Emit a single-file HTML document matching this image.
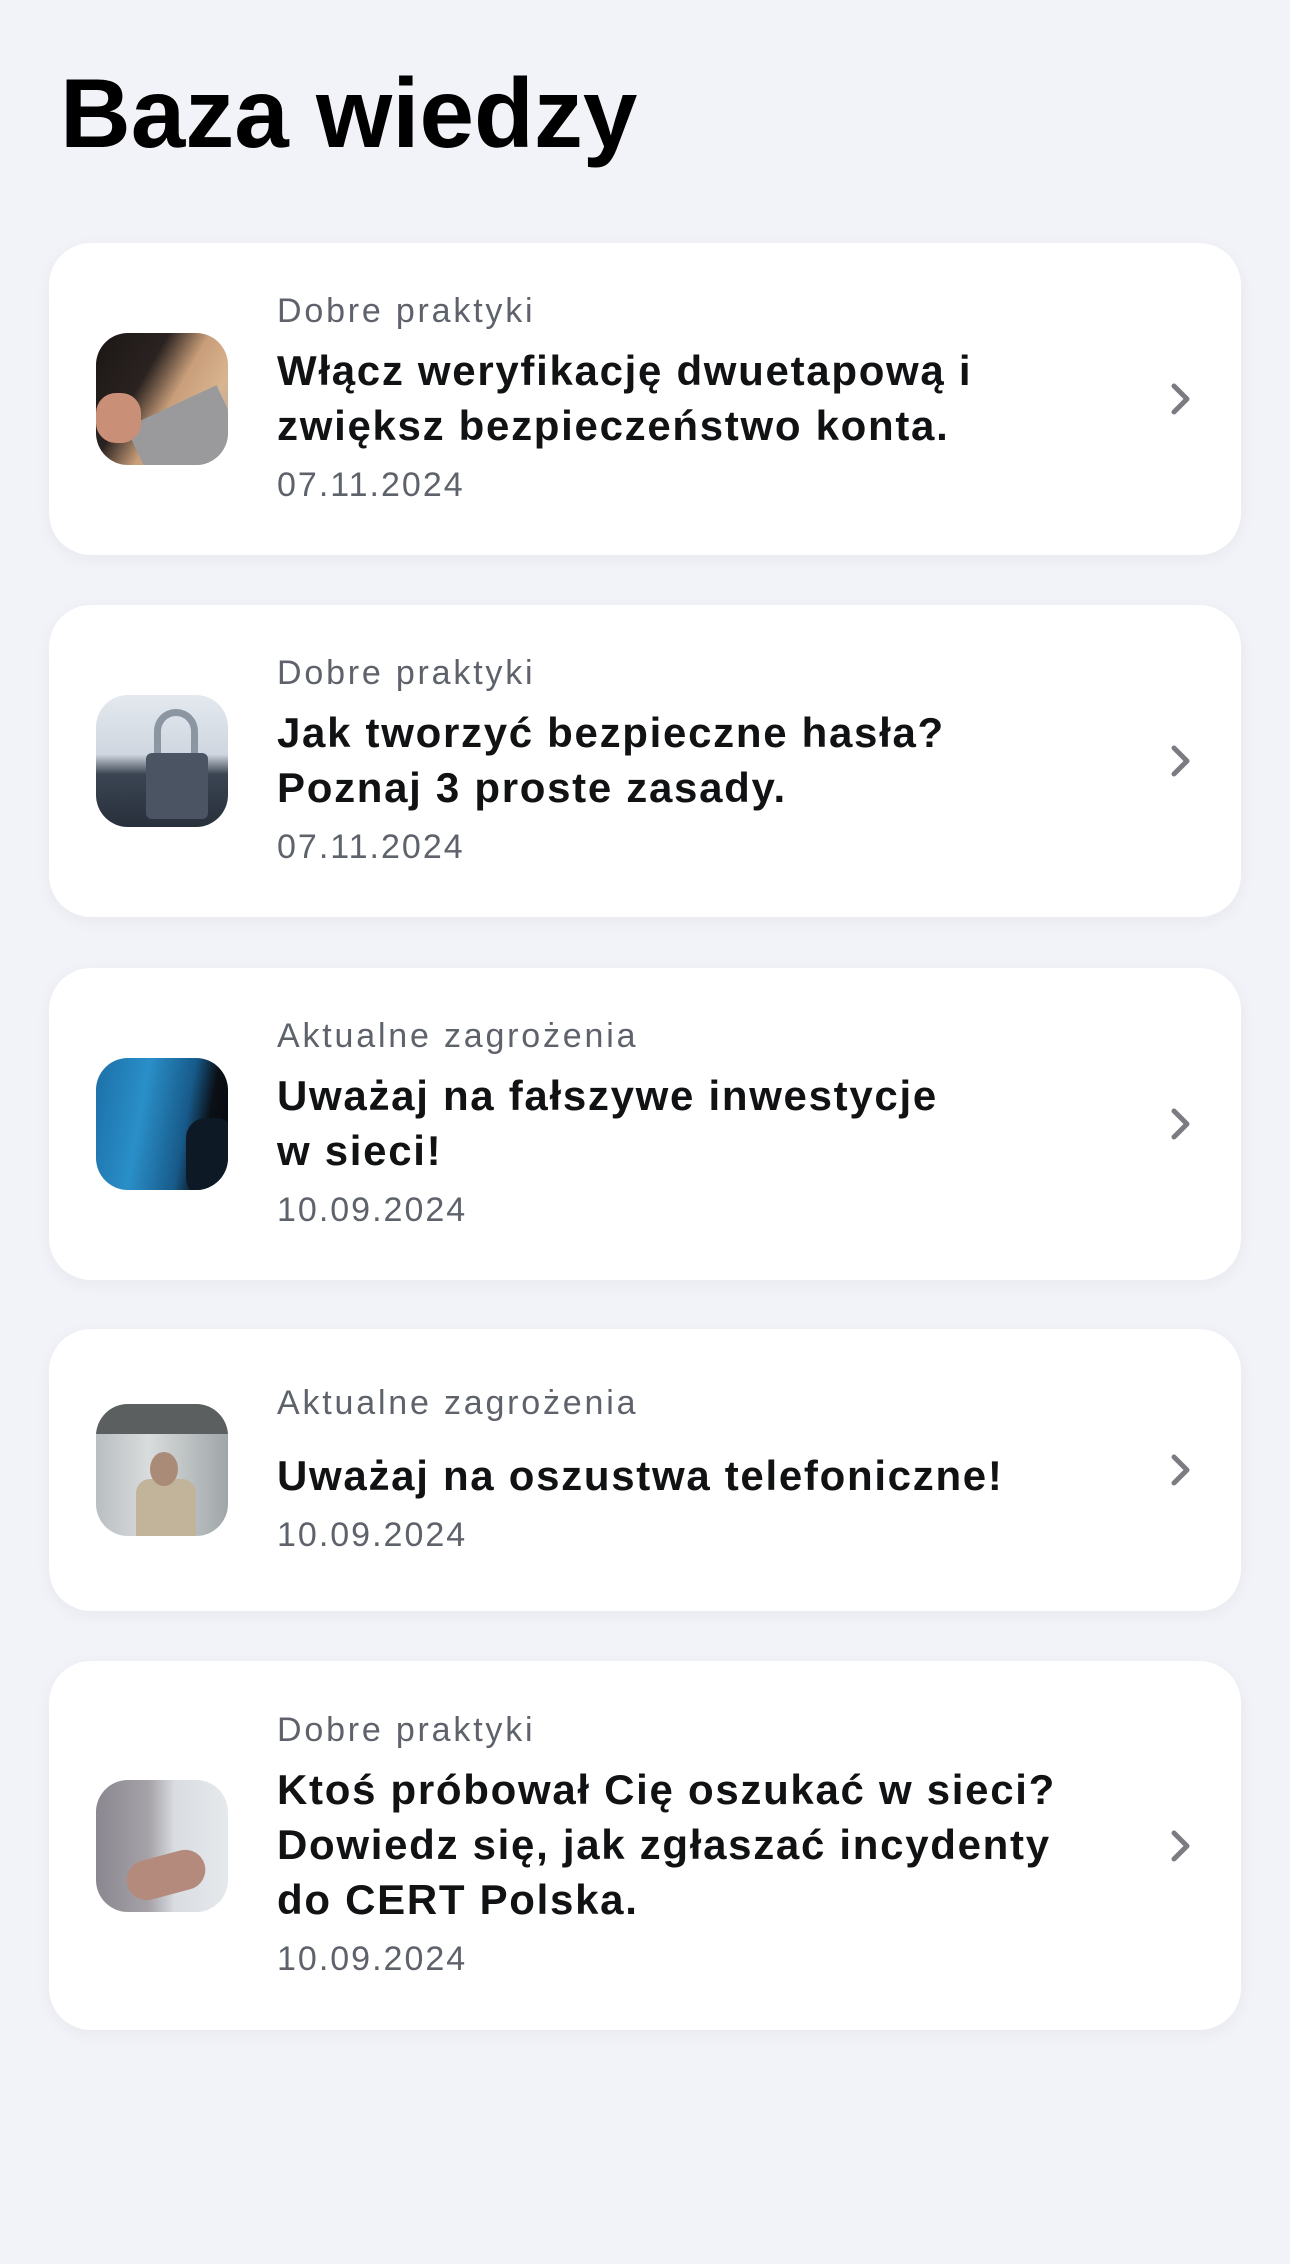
<!DOCTYPE html>
<html><head><meta charset="utf-8"><style>
*{margin:0;padding:0;box-sizing:border-box}
body{width:1290px;height:2264px;background:#f2f3f8;font-family:"Liberation Sans","DejaVu Sans",sans-serif;position:relative;overflow:hidden}
h1{position:absolute;left:60px;top:58px;font-size:98px;font-weight:700;color:#000;letter-spacing:0;line-height:110px}
.card{position:absolute;left:49px;width:1192px;background:#fff;border-radius:42px;box-shadow:0 4px 16px rgba(30,40,80,.05);display:flex;align-items:center}
.img{position:absolute;left:47px;width:132px;height:132px;border-radius:32px;overflow:hidden;top:50%;margin-top:-66px}
.txt{position:absolute;left:228px;top:0;bottom:0;display:flex;flex-direction:column;justify-content:center}
.cat{font-size:34px;line-height:44px;color:#5e626a;margin-bottom:10px;white-space:nowrap;letter-spacing:2.8px}
.t{font-size:42px;line-height:55px;font-weight:700;color:#111214;white-space:nowrap;letter-spacing:1.7px}
.d{font-size:34px;line-height:50px;color:#5e626a;margin-top:7px;letter-spacing:2px}
.chev{position:absolute;left:1120px;top:50%;margin-top:-18px}
</style></head><body>
<h1>Baza wiedzy</h1>

<div class="card" style="top:243px;height:312px">
 <div class="img" style="background:linear-gradient(120deg,#1a1614 0%,#2a2220 35%,#c99e7a 55%,#d8b48f 75%,#a9a7a6 100%)">
  <div style="position:absolute;left:40px;top:70px;width:100px;height:70px;background:#9a9a9c;transform:rotate(-25deg)"></div>
  <div style="position:absolute;left:0;top:60px;width:45px;height:50px;background:#c98f77;border-radius:20px"></div>
 </div>
 <div class="txt"><div class="cat">Dobre praktyki</div><div class="t">Włącz weryfikację dwuetapową i<br>zwiększ bezpieczeństwo konta.</div><div class="d">07.11.2024</div></div>
 <svg class="chev" width="24" height="36" viewBox="0 0 24 36"><path d="M5 5 L18 18 L5 31" fill="none" stroke="#7b7c82" stroke-width="5" stroke-linecap="round" stroke-linejoin="round"/></svg>
</div>

<div class="card" style="top:605px;height:312px">
 <div class="img" style="background:linear-gradient(180deg,#e4e9ef 0%,#cfd6df 45%,#3b4452 60%,#27303b 100%)">
  <div style="position:absolute;left:58px;top:14px;width:44px;height:56px;border:7px solid #8c96a3;border-bottom:none;border-radius:22px 22px 0 0"></div>
  <div style="position:absolute;left:50px;top:58px;width:62px;height:66px;background:#4a5462;border-radius:6px"></div>
 </div>
 <div class="txt"><div class="cat">Dobre praktyki</div><div class="t">Jak tworzyć bezpieczne hasła?<br>Poznaj 3 proste zasady.</div><div class="d">07.11.2024</div></div>
 <svg class="chev" width="24" height="36" viewBox="0 0 24 36"><path d="M5 5 L18 18 L5 31" fill="none" stroke="#7b7c82" stroke-width="5" stroke-linecap="round" stroke-linejoin="round"/></svg>
</div>

<div class="card" style="top:968px;height:312px">
 <div class="img" style="background:linear-gradient(100deg,#1c6fa8 0%,#2a8fc8 35%,#175a8a 65%,#0b1016 80%,#05080c 100%)">
  <div style="position:absolute;left:90px;top:60px;width:50px;height:80px;background:#0d1a26;border-radius:20px"></div>
 </div>
 <div class="txt"><div class="cat">Aktualne zagrożenia</div><div class="t">Uważaj na fałszywe inwestycje<br>w sieci!</div><div class="d">10.09.2024</div></div>
 <svg class="chev" width="24" height="36" viewBox="0 0 24 36"><path d="M5 5 L18 18 L5 31" fill="none" stroke="#7b7c82" stroke-width="5" stroke-linecap="round" stroke-linejoin="round"/></svg>
</div>

<div class="card" style="top:1329px;height:282px">
 <div class="img" style="background:linear-gradient(90deg,#b9bec2 0%,#d9dcdc 40%,#9fa6a8 100%)">
  <div style="position:absolute;left:0;top:0;width:132px;height:30px;background:#5b5f5f"></div>
  <div style="position:absolute;left:40px;top:75px;width:60px;height:60px;background:#c2b39b;border-radius:14px 14px 0 0"></div>
  <div style="position:absolute;left:54px;top:48px;width:28px;height:34px;background:#a98b78;border-radius:50%"></div>
 </div>
 <div class="txt"><div class="cat" style="margin-bottom:23px">Aktualne zagrożenia</div><div class="t">Uważaj na oszustwa telefoniczne!</div><div class="d">10.09.2024</div></div>
 <svg class="chev" width="24" height="36" viewBox="0 0 24 36"><path d="M5 5 L18 18 L5 31" fill="none" stroke="#7b7c82" stroke-width="5" stroke-linecap="round" stroke-linejoin="round"/></svg>
</div>

<div class="card" style="top:1661px;height:369px">
 <div class="img" style="background:linear-gradient(90deg,#8a8790 0%,#a6a2a8 40%,#d9dde2 60%,#e6e9ec 100%)">
  <div style="position:absolute;left:30px;top:75px;width:80px;height:40px;background:#b48a7c;border-radius:20px;transform:rotate(-15deg)"></div>
 </div>
 <div class="txt"><div class="cat">Dobre praktyki</div><div class="t">Ktoś próbował Cię oszukać w sieci?<br>Dowiedz się, jak zgłaszać incydenty<br>do CERT Polska.</div><div class="d">10.09.2024</div></div>
 <svg class="chev" width="24" height="36" viewBox="0 0 24 36"><path d="M5 5 L18 18 L5 31" fill="none" stroke="#7b7c82" stroke-width="5" stroke-linecap="round" stroke-linejoin="round"/></svg>
</div>
</body></html>
